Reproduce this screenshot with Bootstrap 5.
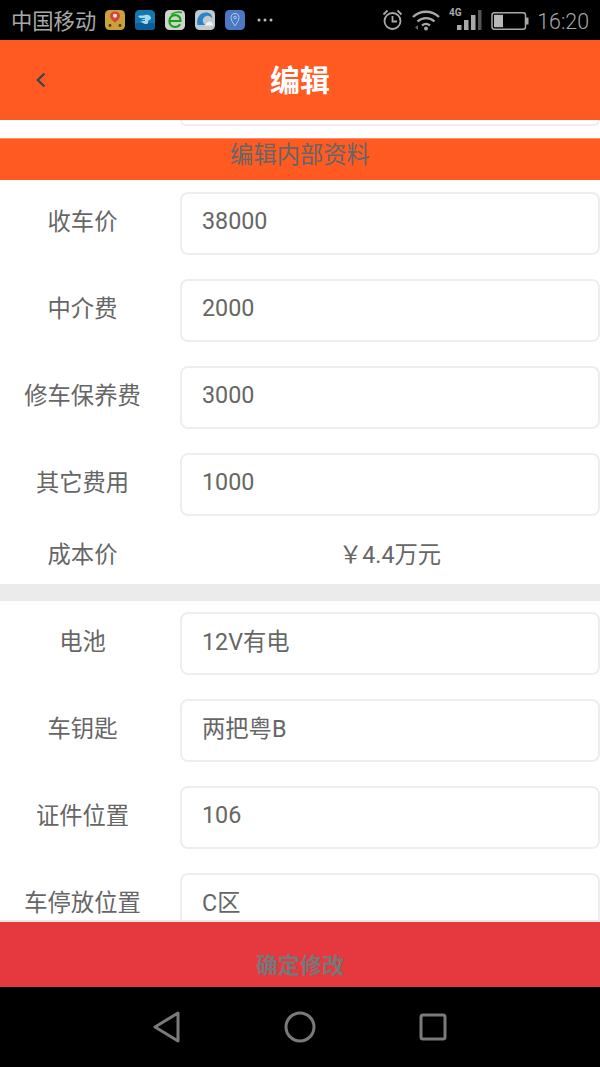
<!doctype html>
<html lang="zh">
<head>
<meta charset="utf-8">
<title>编辑</title>
<link href="https://cdn.jsdelivr.net/npm/bootstrap@5.3.0/dist/css/bootstrap.min.css" rel="stylesheet">
<style>
html,body{height:1067px;overflow:hidden}
body{font-family:Roboto,"Noto Sans CJK SC",sans-serif;color:#666;background:#fff}
.shell{height:1067px}
.statusbar{height:40px;flex:none;background:#000;color:#a8a8a8;font-size:21.3px;padding:0 11px}
.statusbar svg{display:block;flex:none}
.carrier{width:94px;margin-top:4px}
.gapten{margin-left:10px}
.gapdots{margin-left:12px}
.gapnine{margin-left:9px}
.sigicon{margin-left:9px;align-self:flex-start;margin-top:6px}
.clock{margin-left:8px;margin-top:4px;font-weight:300}
.topbar{height:80px;flex:none;background:#ff5a22;color:#fff;font-size:30px;font-weight:700}
.backbtn{left:35px;top:30px;width:12px;height:20px}
.pane{min-height:0;overflow:hidden}
.stub{height:6px;margin-left:180px;border:2px solid #eee;border-top:0;border-radius:0 0 8px 8px}
.sectionhead{margin-top:12px;height:42px;background:#ff5a22;border-top:1px solid #ff8f66;color:#666;font-size:23.3px;line-height:32px;text-align:center}
.formgroup{padding-top:12px;height:87px;display:flex;flex:none}
.fieldlabel{width:165px;flex:none;font-size:23.3px;text-align:center;line-height:61px;white-space:nowrap;margin:0}
.fieldinput.form-control{margin-left:15px;height:63px;flex:1;min-width:0;width:auto;padding:0 20px 6px;font-size:23.3px;line-height:28px;color:#666;border:2px solid #eee;border-radius:8px;background:#fff}
.fieldinput.form-control.mixedval{padding-bottom:8px}
.costline{height:56px;font-size:23.3px;display:flex}
.costline .fieldlabel,.costvalue{line-height:54px}
.costvalue{margin-left:15px;flex:1;text-align:center}
.graygap{height:17px;background:#ebebeb;margin-bottom:-1px}
.confirm.btn{height:67px;flex:none;border:0;border-top:2px solid #e8e8e8;border-radius:0;background:#e5393f;color:#777;font-size:22px;font-weight:700;padding:23px 0 0;line-height:30px;width:100%}
.navkeys{height:80px;flex:none;background:#000}
.navback{margin-right:102px;margin-left:-2px}
.navsquare{margin-left:103px}
</style>
</head>
<body>
<div class="shell d-flex flex-column">
  <div class="statusbar d-flex align-items-center">
    <span class="carrier">中国移动</span>
    <svg width="20" height="20" viewBox="0 0 20 20"><rect width="20" height="20" rx="4.500" fill="#c9a23a"/><path d="M10 1.500c-3 0-5 2-5 4.500 0 3 5 6.500 5 6.500S15 9 15 6c0-2.500-2-4.500-5-4.500z" fill="#d8433a"/><circle cx="10" cy="5.800" r="2" fill="#eee"/><circle cx="5" cy="15.500" r="1.400" fill="#4a3a1a"/><circle cx="15" cy="15.500" r="1.400" fill="#4a3a1a"/></svg>
    <svg class="gapten" width="20" height="20" viewBox="0 0 20 20"><rect width="20" height="20" rx="4.500" fill="#1478b0"/><rect y="13" width="20" height="7" rx="3" fill="#0b5f96"/><path d="M3 6c3-1 5 0 7-1s6 0 6 3c0 2-3 2-3 3s1 3-2 3-3-2-6-2c2-.5 3-1 4-2-2 0-4-2-6-4z" fill="#a6dbee"/><path d="M5 8.500h5M6 10.500h4" stroke="#1478b0"/></svg>
    <svg class="gapten" width="20" height="20" viewBox="0 0 20 20"><rect width="20" height="20" rx="4.500" fill="#cfd3cd"/><path d="M4.500 11h11c.3-3.500-2-5.800-5.300-5.800S4.400 7.600 4.400 11s2.300 6 5.700 6c2.300 0 3.900-1 5-2.800" fill="none" stroke="#17a312" stroke-width="2.200"/><path d="M6 4.500C9 2.500 13 1.500 17 2.500" fill="none" stroke="#17a312" stroke-width="1.500"/></svg>
    <svg class="gapten" width="20" height="20" viewBox="0 0 20 20"><rect width="20" height="20" rx="4.500" fill="#c3c9cc"/><path d="M2.500 15C1 8 5 2.500 11 2.500c3.500 0 6 2 6.500 6-2-2.500-4.500-3.200-6.800-2.200-2.500 1-3.500 3.500-2.700 5.700.4 1.200 1.200 2.200 2.500 3z" fill="#2b84c9"/><path d="M9 15.500c2.500-.5 2.500-4 5-4s4 2 4 4z" fill="#eef2f4"/></svg>
    <svg class="gapten" width="20" height="20" viewBox="0 0 20 20"><rect width="20" height="20" rx="4.500" fill="#4a78c2"/><path d="M10 3.500c-2.500 0-4 1.800-4 4 0 3 4 8.500 4 8.500s4-5.500 4-8.500c0-2.200-1.500-4-4-4z" fill="none" stroke="#b9cdec" stroke-width="1"/><circle cx="10" cy="7.500" r="1.300" fill="none" stroke="#b9cdec"/></svg>
    <svg class="gapdots" width="16" height="20" viewBox="0 0 16 20"><g fill="#bbb"><circle cx="2" cy="10" r="1.500"/><circle cx="8" cy="10" r="1.500"/><circle cx="14" cy="10" r="1.500"/></g></svg>
    <svg class="ms-auto" width="21" height="24" viewBox="0 0 21 24"><g fill="none" stroke="#a8a8a8" stroke-width="1.800"><circle cx="10.500" cy="13" r="8"/><path d="M10.500 8v5.500H15M1.500 6.500 5.500 2.500M19.500 6.500l-4-4"/></g></svg>
    <svg class="gapnine" width="28" height="22" viewBox="0 0 28 22"><g fill="none" stroke="#a8a8a8" stroke-width="2.300"><path d="M1 8c7-7 19-7 26 0M5.500 12.500c5-4.500 12-4.500 17 0M10 16.500c2.500-2 5.500-2 8 0"/></g><circle cx="14" cy="19.500" r="2" fill="#a8a8a8"/><path d="M6 16v5l-3-2.500z" fill="#666"/></svg>
    <svg class="sigicon" width="33" height="24" viewBox="0 0 33 24"><g fill="#a8a8a8"><rect x="8" y="19" width="4.500" height="5"/><rect x="15" y="14" width="4.500" height="10"/><rect x="22" y="9" width="4.500" height="15"/></g><rect x="29" y="4" width="3.500" height="20" fill="#555"/><text x="0" y="9.500" font-size="10" font-weight="700" fill="#a8a8a8" font-family="Roboto">4G</text></svg>
    <svg class="gapnine" width="38" height="22" viewBox="0 0 38 22"><rect x="1" y="3.800" width="33.500" height="16.400" rx="2.500" fill="none" stroke="#a8a8a8" stroke-width="1.500"/><rect x="3" y="5.800" width="9" height="12.400" fill="#b8b8b8"/><rect x="35" y="8.500" width="2.500" height="7" fill="#a8a8a8"/></svg>
    <span class="clock">16:20</span>
  </div>

  <div class="topbar position-relative d-flex align-items-center justify-content-center">
    <svg class="backbtn position-absolute" viewBox="0 0 12 20"><path d="M9.500 3.500 2.800 10l6.700 6.500" fill="none" stroke="#444" stroke-width="2.400"/></svg>
    <span>编辑</span>
  </div>

  <div class="pane flex-grow-1">
    <div class="stub"></div>
    <div class="sectionhead">编辑内部资料</div>
    <div class="formgroup"><label class="fieldlabel">收车价</label><input class="form-control fieldinput" value="38000"></div>
    <div class="formgroup"><label class="fieldlabel">中介费</label><input class="form-control fieldinput" value="2000"></div>
    <div class="formgroup"><label class="fieldlabel">修车保养费</label><input class="form-control fieldinput" value="3000"></div>
    <div class="formgroup"><label class="fieldlabel">其它费用</label><input class="form-control fieldinput" value="1000"></div>
    <div class="costline"><span class="fieldlabel">成本价</span><span class="costvalue">￥4.4万元</span></div>
    <div class="graygap"></div>
    <div class="formgroup"><label class="fieldlabel">电池</label><input class="form-control fieldinput mixedval" value="12V有电"></div>
    <div class="formgroup"><label class="fieldlabel">车钥匙</label><input class="form-control fieldinput mixedval" value="两把粤B"></div>
    <div class="formgroup"><label class="fieldlabel">证件位置</label><input class="form-control fieldinput" value="106"></div>
    <div class="formgroup"><label class="fieldlabel">车停放位置</label><input class="form-control fieldinput mixedval" value="C区"></div>
  </div>

  <button class="btn confirm" type="button">确定修改</button>

  <div class="navkeys d-flex align-items-center justify-content-center">
    <svg class="navback" width="30" height="34" viewBox="0 0 30 34"><path d="M26 3 3 17l23 14z" fill="none" stroke="#7a7a7a" stroke-width="3" stroke-linejoin="round"/></svg>
    <svg width="32" height="32" viewBox="0 0 32 32"><circle cx="16" cy="16" r="14" fill="none" stroke="#7a7a7a" stroke-width="3"/></svg>
    <svg class="navsquare" width="28" height="28" viewBox="0 0 28 28"><rect x="2" y="2" width="24" height="24" rx="2" fill="none" stroke="#7a7a7a" stroke-width="3"/></svg>
  </div>
</div>
<script src="https://cdn.jsdelivr.net/npm/bootstrap@5.3.0/dist/js/bootstrap.bundle.min.js"></script>
</body>
</html>
